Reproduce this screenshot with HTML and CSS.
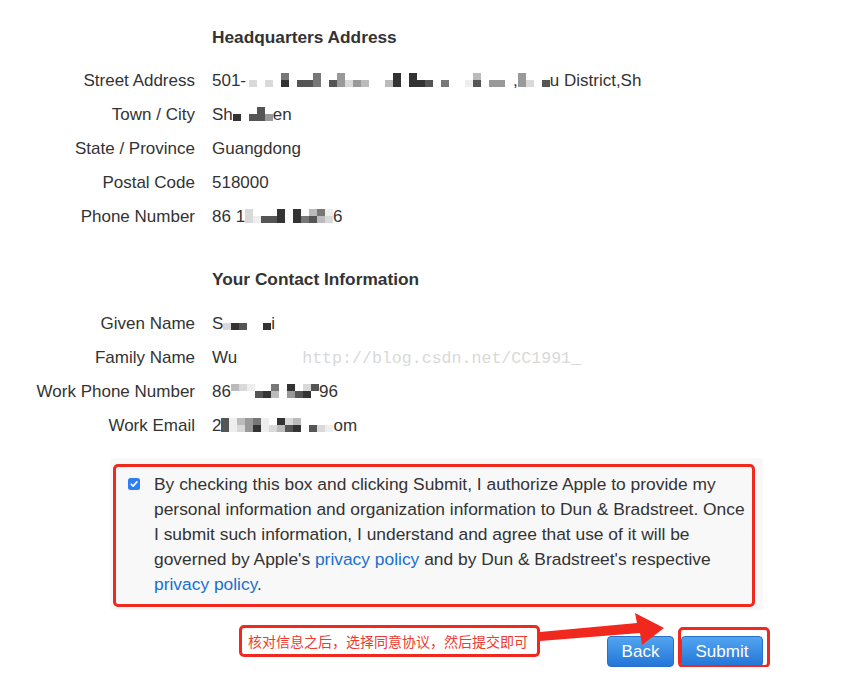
FILE: index.html
```html
<!DOCTYPE html>
<html lang="en">
<head>
<meta charset="utf-8">
<title>Review</title>
<link rel="stylesheet" href="styles.css">
</head>
<body>
<div class="page">
  <section class="sect">
    <h2 class="head">Headquarters Address</h2>
    <div class="lbl">Street Address</div>
    <div class="val">501-<span class="mz sp"><i><b></b><b class="g2"></b></i><i><b></b><b></b></i><i><b></b><b class="g2"></b></i><i><b></b><b></b></i><i><b class="g5"></b><b class="g7"></b></i><i><b></b><b></b></i><i><b></b><b class="g6"></b></i><i><b></b><b class="g6"></b></i><i><b class="g5"></b><b class="g5"></b></i><i><b></b><b></b></i><i><b></b><b class="g6"></b></i><i><b class="g4"></b><b class="g4"></b></i><i><b></b><b class="g2"></b></i><i><b></b><b class="g4"></b></i><i><b></b><b class="g3"></b></i><i><b></b><b></b></i><i><b></b><b></b></i><i><b></b><b class="g3"></b></i><i><b class="g7"></b><b class="g7"></b></i><i><b></b><b></b></i><i><b class="g7"></b><b class="g7"></b></i><i><b></b><b class="g7"></b></i><i><b></b><b class="g6"></b></i><i><b></b><b></b></i><i><b></b><b class="g5"></b></i><i><b></b><b></b></i><i><b></b><b></b></i><i><b></b><b class="g1"></b></i><i><b class="g3"></b><b class="g6"></b></i><i><b></b><b></b></i><i><b></b><b class="g4"></b></i><i><b></b><b class="g4"></b></i><i><b></b><b></b></i></span>,<span class="mz"><i><b class="g4"></b><b class="g4"></b></i><i><b></b><b class="g2"></b></i><i><b></b><b></b></i><i><b></b><b class="g6"></b></i></span>u District,Sh</div>
    <div class="lbl">Town / City</div>
    <div class="val">Sh<span class="mz"><i><b></b><b class="g7"></b></i><i><b></b><b></b></i><i><b></b><b class="g6"></b></i><i><b class="g6"></b><b class="g6"></b></i><i><b></b><b class="g4"></b></i></span>en</div>
    <div class="lbl">State / Province</div>
    <div class="val">Guangdong</div>
    <div class="lbl">Postal Code</div>
    <div class="val">518000</div>
    <div class="lbl">Phone Number</div>
    <div class="val">86 1<span class="mz"><i><b class="g2"></b><b class="g2"></b></i><i><b></b><b class="g1"></b></i><i><b></b><b class="g6"></b></i><i><b></b><b class="g6"></b></i><i><b class="g7"></b><b class="g7"></b></i><i><b></b><b></b></i><i><b class="g7"></b><b class="g7"></b></i><i><b></b><b class="g5"></b></i><i><b class="g3"></b><b class="g6"></b></i><i><b class="g5"></b><b class="g3"></b></i><i><b class="g1"></b><b class="g2"></b></i></span>6</div>
  </section>

  <section class="sect contact">
    <h2 class="head">Your Contact Information</h2>
    <div class="lbl">Given Name</div>
    <div class="val">S<span class="mz"><i><b></b><b class="g2"></b></i><i><b></b><b class="g7"></b></i><i><b></b><b class="g6"></b></i><i><b></b><b></b></i><i><b></b><b></b></i><i><b></b><b class="g7"></b></i></span>i</div>
    <div class="lbl">Family Name</div>
    <div class="val">Wu<span class="wm">http://blog.csdn.net/CC1991_</span></div>
    <div class="lbl">Work Phone Number</div>
    <div class="val">86<span class="mz"><i><b class="g3"></b><b></b></i><i><b class="g2"></b><b></b></i><i><b class="g1"></b><b></b></i><i><b></b><b class="g6"></b></i><i><b></b><b class="g7"></b></i><i><b class="g5"></b><b class="g3"></b></i><i><b></b><b></b></i><i><b class="g7"></b><b class="g4"></b></i><i><b></b><b class="g6"></b></i><i><b class="g2"></b><b class="g7"></b></i><i><b class="g6"></b><b></b></i></span>96</div>
    <div class="lbl">Work Email</div>
    <div class="val">2<span class="mz"><i><b class="g6"></b><b class="g6"></b></i><i><b class="g1"></b><b class="g1"></b></i><i><b class="g3"></b><b class="g2"></b></i><i><b class="g4"></b><b class="g4"></b></i><i><b class="g5"></b><b class="g7"></b></i><i><b class="g1"></b><b class="g1"></b></i><i><b></b><b class="g2"></b></i><i><b class="g7"></b><b class="g3"></b></i><i><b class="g2"></b><b class="g6"></b></i><i><b class="g3"></b><b class="g7"></b></i><i><b></b><b></b></i><i><b></b><b class="g6"></b></i><i><b></b><b class="g2"></b></i><i><b></b><b class="g1"></b></i></span>om</div>
  </section>

  <div class="consent">
    <div class="consent-mark">
      <span class="check"><svg width="12" height="12" viewBox="0 0 12 12"><rect x="0" y="0" width="12" height="12" rx="2.5" fill="#2f7ef3"/><path d="M3.2 6.2 L5.1 8.1 L8.9 3.9" fill="none" stroke="#fff" stroke-width="1.6" stroke-linecap="round" stroke-linejoin="round"/></svg></span>
      <p class="consent-text">By checking this box and clicking Submit, I authorize Apple to provide my personal information and organization information to Dun &amp; Bradstreet. Once I submit such information, I understand and agree that use of it will be governed by Apple's <a href="#">privacy policy</a> and by Dun &amp; Bradstreet's respective <a href="#">privacy policy</a>.</p>
    </div>
  </div>

  <div class="actions">
    <div class="note">核对信息之后，选择同意协议，然后提交即可</div>
    <div class="buttons">
      <button class="btn back">Back</button>
      <span class="submit-wrap"><button class="btn">Submit</button></span>
    </div>
    <svg class="arrow" width="560" height="40" viewBox="0 0 560 40"><polygon points="430,22 527,13 525,3 554,18 532,35 530,23 430,31" fill="#f1281e"/></svg>
  </div>
</div>
</body>
</html>
```

FILE: styles.css
```css
* { box-sizing: border-box; }
html, body { margin: 0; padding: 0; background: #fff; }
body {
  font-family: "Liberation Sans", Arial, sans-serif;
  font-size: 17px;
  color: #333;
}
.page { padding-top: 27px; }

.sect {
  display: grid;
  grid-template-columns: 195px 1fr;
  column-gap: 17px;
}
.contact { margin-top: 35px; }
.head {
  grid-column: 2;
  margin: 0 0 16px;
  font-size: 17.3px;
  line-height: 21px;
  font-weight: bold;
  color: #333;
}
.contact .head { margin-bottom: 17px; }
.lbl, .val {
  line-height: 34px;
  height: 34px;
  white-space: nowrap;
}
.lbl { text-align: right; }

.mz {
  display: inline-block;
  overflow: hidden;
  vertical-align: -1px;
  font-size: 0;
  line-height: 0;
  white-space: nowrap;
}
.mz.sp { margin-left: 3px; }
.mz i { display: inline-block; width: 8px; }
.mz b { display: block; height: 7px; }
.g1 { background: #eeeeee; }
.g2 { background: #d9d9d9; }
.g3 { background: #bbbbbb; }
.g4 { background: #999999; }
.g5 { background: #777777; }
.g6 { background: #555555; }
.g7 { background: #333333; }

.wm {
  margin-left: 65px;
  font-family: "Liberation Mono", "DejaVu Sans Mono", monospace;
  font-size: 16.6px;
  line-height: 0;
  color: #d9d9d9;
}

.consent {
  margin: 15px 0 0 110px;
  width: 653px;
  background: #f8f8f8;
  border-radius: 4px;
  padding: 6px 8px 3px 3px;
}
.consent-mark {
  display: flex;
  align-items: flex-start;
  border: 3px solid #f1281e;
  border-radius: 5px;
  padding: 5px 3px 7px 12px;
}
.check {
  display: block;
  width: 12px;
  height: 12px;
  margin-top: 6px;
  margin-right: 14px;
  flex: none;
}
.check svg { display: block; }
.consent-text {
  margin: 0;
  font-size: 17.4px;
  line-height: 25px;
  color: #333;
}
.consent-text a { color: #1a6fd0; text-decoration: none; }

.actions {
  position: relative;
  margin-left: 110px;
  width: 653px;
  display: flex;
  align-items: flex-start;
}
.note {
  margin: 15px 0 0 129px;
  height: 32px;
  border: 3px solid #f1281e;
  border-radius: 5px;
  padding: 0 9px 0 6px;
  line-height: 26px;
  font-family: "Noto Sans CJK SC", sans-serif;
  font-size: 14px;
  color: #ee3a2f;
  white-space: nowrap;
}
.buttons {
  margin: 26px 0 0 auto;
  display: flex;
  gap: 7px;
}
.btn {
  height: 31px;
  width: 82px;
  border: 1px solid #2a6fc6;
  border-radius: 4px;
  background: linear-gradient(#52a5f1, #2375d8);
  color: #fff;
  font-family: "Liberation Sans", Arial, sans-serif;
  font-size: 17px;
  padding: 0;
}
.btn.back { width: 67px; }
.submit-wrap { position: relative; display: block; }
.submit-wrap .btn { display: block; }
.submit-wrap::after {
  content: "";
  position: absolute;
  left: -3px;
  right: -7px;
  top: -9px;
  bottom: -1px;
  border: 3px solid #f1281e;
  border-radius: 5px;
}
.arrow {
  position: absolute;
  left: 0;
  top: 0;
  pointer-events: none;
}
```
